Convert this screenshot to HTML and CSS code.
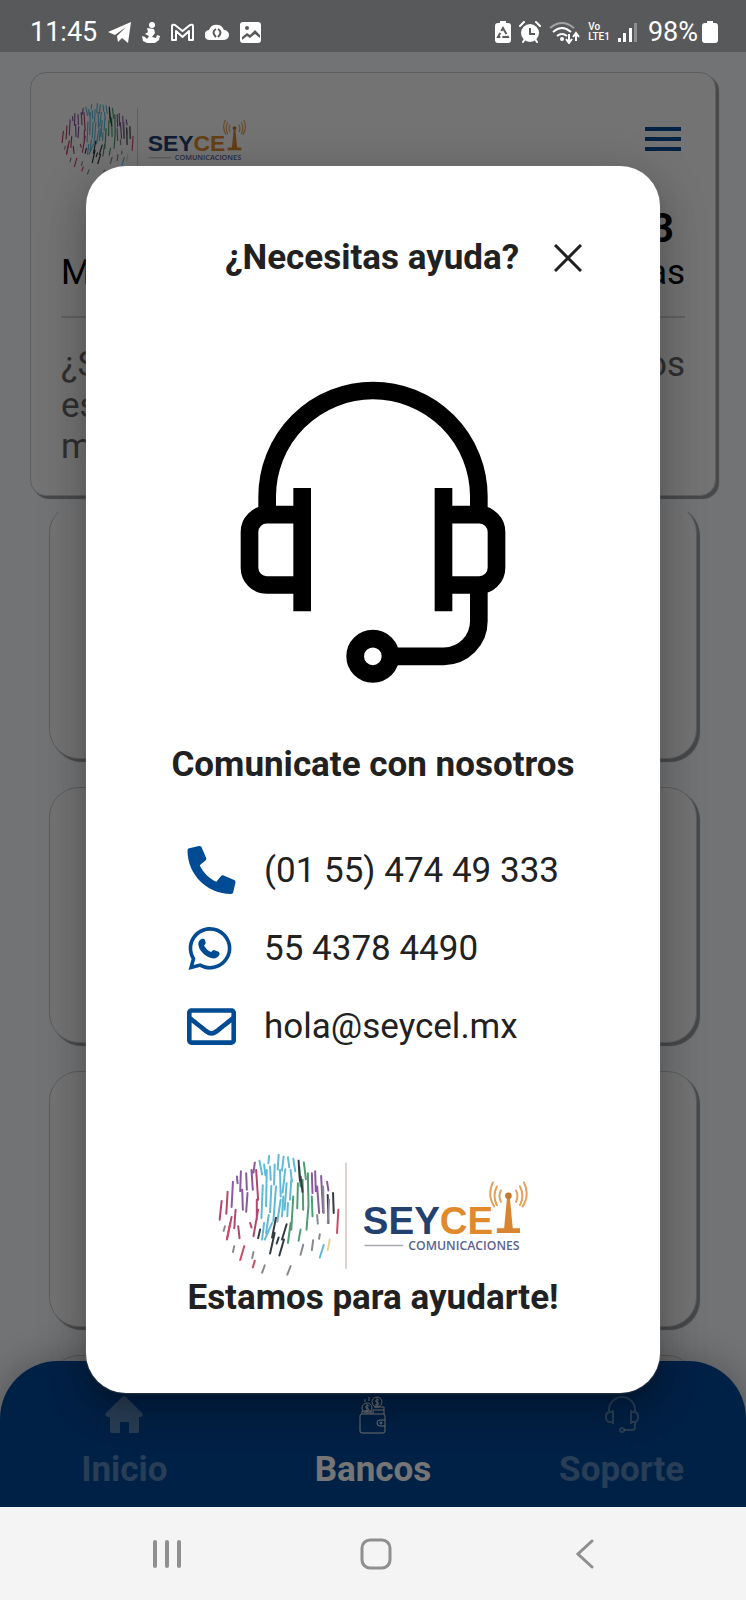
FILE: index.html
```html
<!DOCTYPE html>
<html lang="es">
<head>
  <meta charset="UTF-8">
  <meta name="viewport" content="width=device-width, initial-scale=1.0">
  <title>Seycel</title>
  <link rel="stylesheet" href="styles.css">
</head>
<body>

  <!-- Logo -->
  <svg class="sprite" aria-hidden="true">
    <symbol id="logo" viewBox="50 66 940 374">
      <g fill="none" stroke-width="6" stroke-linecap="round">
        <path stroke="#5fb9d8" d="M205 78l-2 22M234 74l-3 45M249 80l-5 42M262 82l4 30M278 86l6 38M176 92l8 42M190 104l4 32M208 110l2 40M222 104l-2 60M238 120l2 80M254 118l-8 70M270 120l4 36M186 166l-4 100M198 120l-2 110M212 168l-4 80M226 170l-8 104M240 210l-10 66M258 160l-6 80M272 150l-4 60M248 200l-4 60M262 220l-2 40M204 256l-8 54M190 280l-6 50M214 280l-22 50M370 346l-12 38"/>
        <path stroke="#8a5a9c" d="M162 98l-4 30M120 124l-2 60M136 130l2 50M152 120l4 60M124 180l2 60M140 190l-4 56M96 156l-4 76M108 140l2 20M344 124l2 60M362 138l6 110M350 170l6 80M334 130l2 60M380 156l4 26"/>
        <path stroke="#b3476d" d="M166 120l6 90M168 210l0 60M172 240l-14 80M80 186l-4 66M62 214l-6 56M104 240l-4 56M92 262l-14 66M148 280l4 14M112 290l4 36"/>
        <path stroke="#d04a66" d="M130 350l-12 42M162 394l-6 20M414 240l-4 70M88 280l-10 50"/>
        <path stroke="#4e9b74" d="M292 160l-2 76M310 98l6 50M306 150l2 90M322 130l2 100M278 200l-6 100M324 226l-6 74M334 200l2 60M270 280l-8 60M300 300l-6 34M296 110l4 60"/>
        <path stroke="#333b42" d="M294 92l4 60M300 140l6 46M226 264l-12 60M222 310l-14 62M258 284l-14 46M250 330l-14 48M234 324l-6 18M178 300l-6 26M398 190l2 60M382 196l2 84"/>
        <path stroke="#8b8790" d="M72 290l-4 14M100 350l-4 18M158 368l-4 18M192 408l-8 22M270 410l-10 26M308 346l-8 30M338 332l-4 30M358 314l-2 14M350 256l2 26M386 210l-4 70M368 170l2 80"/>
        <path stroke="#e4d49a" d="M388 330l-6 32"/>
      </g>
      <path stroke="#d9c8c4" stroke-width="5" d="M437 98v320"/>
      <text class="logo-name" x="488" y="314" fill="#23406f">SEY<tspan fill="#e08a2b">CE</tspan></text>
      <path fill="#d9852f" d="M923 200h8l9 96h22v14h-70v-14h22z"/>
      <circle cx="927" cy="198" r="10" fill="#c9772c"/>
      <g fill="none" stroke="#e3a25c" stroke-width="6" stroke-linecap="round">
        <path d="M904 182q-8 17 0 34M892 170q-14 28 0 56M880 158q-18 38 4 72M950 182q8 17 0 34M962 170q14 28 0 56M974 158q18 38-4 72"/>
      </g>
      <path stroke="#a9a9b4" stroke-width="4" d="M493 348h116"/>
      <text class="logo-sub" x="625" y="361" fill="#5b6292">COMUNICACIONES</text>
    </symbol>
  </svg>

  <!-- Barra de estado -->
  <div class="status-bar">
    <div class="status-group">
      <span class="status-text status-time">11:45</span>
      <svg width="23" height="21" viewBox="0 0 23 21" fill="#fff"><path d="M0 10 23 0l-3 21-6-5-4 4-1-6 9-9L7 13z"/></svg>
      <svg width="18" height="21" viewBox="0 0 18 21" fill="#fff"><circle cx="10" cy="3" r="3"/><path d="M5 6l7 1 1 4-3 4 4 1 1-3 3 1-1 4-4 3H5l-4-2-1-5 3 1 2 2 2-3-4-2 3-2z"/></svg>
      <svg width="23" height="19" viewBox="0 0 23 19" fill="none" stroke="#fff" stroke-width="2"><path d="M1 17V3q0-2 3-1l7.500 6L19 2q3-1 3 1v14h-4V8l-6.500 6L5 8v9z" stroke-linejoin="round"/></svg>
      <svg width="24" height="18" viewBox="0 0 24 18"><path fill="#fff" d="M5 17a5 5 0 0 1-1-10 8 8 0 0 1 15 0 5 5 0 0 1 0 10z"/><path fill="none" stroke="#58595b" stroke-width="2" d="M11 6q-5 3 0 8M13 6q5 3 0 8"/></svg>
      <svg width="21" height="21" viewBox="0 0 21 21"><rect width="21" height="21" rx="3" fill="#fff"/><circle cx="7" cy="6" r="2" fill="#58595b"/><path fill="#58595b" d="M2 15l5-4 3 2 5-5 5 5v3l-5-4-5 4-3-2-5 4z"/></svg>
    </div>
    <div class="status-group status-right">
      <svg width="16" height="22" viewBox="0 0 16 22"><path fill="#fff" d="M5 0h6v2h2q3 0 3 3v14q0 3-3 3H3q-3 0-3-3V5q0-3 3-3h2z"/><path fill="none" stroke="#58595b" stroke-width="2" stroke-dasharray="7 2" d="M8 7l5 9H3z"/></svg>
      <svg width="22" height="22" viewBox="0 0 22 22"><circle cx="11" cy="12" r="9" fill="#fff"/><path stroke="#fff" stroke-width="2" stroke-linecap="round" d="M1 5l4-4M21 5l-4-4M4 21l2-3M18 21l-2-3"/><path fill="none" stroke="#58595b" stroke-width="2" d="M11 7v6h5"/></svg>
      <svg width="31" height="23" viewBox="0 0 31 23" fill="none" stroke="#fff" stroke-width="2"><path stroke="#a2a3a4" d="M1 7q12-10 24 0"/><path d="M4 11q9-8 18 0M8 15q5-4 10 0"/><circle cx="13" cy="18" r="1"/><path d="M20 13v8M17 18l3 4 3-4M27 20v-7M24 16l3-4 3 4"/></svg>
      <span class="volte"><span>Vo</span><span>LTE1</span></span>
      <svg width="19" height="21" viewBox="0 0 19 21"><path fill="#fff" d="M0 16h3v4H0zM5 11h3v9H5zM11 6h3v14h-3z"/><path fill="#8d8e90" d="M16 1h3v19h-3z"/></svg>
      <span class="status-text">98%</span>
      <svg width="16" height="22" viewBox="0 0 16 22"><path fill="#fff" d="M5 0h6v2h2q3 0 3 3v14q0 3-3 3H3q-3 0-3-3V5q0-3 3-3h2z"/></svg>
    </div>
  </div>

  <main class="app">
    <section class="card account">
      <div class="account-top">
        <svg class="logo-small"><use href="#logo"/></svg>
        <button class="menu-button" aria-label="Menú"><i></i><i></i><i></i></button>
      </div>
      <div class="account-number">3</div>
      <div class="account-row"><span>M</span><span>as</span></div>
      <hr>
      <div class="account-help">
        <p>¿S<br>es<br>m</p>
        <p>os</p>
      </div>
    </section>

    <div class="bank-list">
      <div class="card bank"></div>
      <div class="card bank"></div>
      <div class="card bank"></div>
      <div class="card bank"></div>
    </div>

    <nav class="tabs">
      <a href="#inicio" class="tab">
        <svg width="38" height="38" viewBox="0 0 38 38" fill="currentColor"><path d="M17 1q2-2 4 0l16 16q2 3-1 4h-2v14q0 2-2 2h-8V26h-9v11H7q-2 0-2-2V21H3q-4-1-2-4z"/></svg>
        <span>Inicio</span>
      </a>
      <a href="#bancos" class="tab active">
        <svg width="28" height="38" viewBox="0 0 28 38" fill="none" stroke="currentColor"><rect x="1" y="18" width="25" height="19" rx="2"/><path d="M26 24h-5a3 3 0 0 0 0 6h5M3 18v-3h9v3M14 18v-4h11v4M15 11h10v3"/><circle cx="8" cy="12" r="5"/><circle cx="18" cy="6" r="5"/><circle cx="22" cy="27" r="1"/><path d="M20 4q-4-1-3 2 4 0 2 3h-3M18 2v8M10 10q-4-1-3 2 4 0 2 3H6M8 8v8M6 3v3M10 1v4"/></svg>
        <span>Bancos</span>
      </a>
      <a href="#soporte" class="tab">
        <svg width="34" height="38" viewBox="0 0 34 38" fill="none" stroke="currentColor" stroke-width="2"><path d="M4 15v-1a13 13 0 0 1 26 0v1M8 14v14M26 14v14M8 16H4q-3 1-3 4v2q0 3 3 4h4M26 16h4q3 1 3 4v2q0 3-3 4h-4M30 26v5q0 3-3 3h-8"/><circle cx="17" cy="34" r="2"/></svg>
        <span>Soporte</span>
      </a>
    </nav>

    <!-- Ventana de ayuda -->
    <div class="overlay">
      <section class="modal" role="dialog" aria-labelledby="help-title">
        <div class="modal-header">
          <h2 id="help-title">¿Necesitas ayuda?</h2>
          <button class="close-button" aria-label="Cerrar">
            <svg width="28" height="28" viewBox="0 0 28 28" stroke="#212121" stroke-width="3"><path d="M1 1l26 26M27 1L1 27"/></svg>
          </button>
        </div>

        <svg class="headset" viewBox="60 34 797 906" fill="none" stroke="#000" stroke-width="53">
          <path d="M141 425V380a317 317 0 0 1 635 0v45"/>
          <path d="M246 355v370M670 355v370"/>
          <path d="M246 435H140a52 52 0 0 0-52 52v107a52 52 0 0 0 52 52h106"/>
          <path d="M670 435h107a52 52 0 0 1 52 52v107a52 52 0 0 1-52 52H670"/>
          <path d="M776 655v100a105 105 0 0 1-105 105H525"/>
          <circle cx="458" cy="860" r="53"/>
        </svg>

        <h2>Comunicate con nosotros</h2>

        <ul class="contact">
          <li>
            <a href="tel:015547449333">
              <svg width="49" height="48" viewBox="0 0 512 512" fill="#004b93"><path transform="matrix(-1 0 0 1 512 0)" d="M493.400 24.600l-104-24c-11.300-2.600-22.900 3.300-27.500 13.900l-48 112c-4.200 9.800-1.400 21.300 6.900 28l60.600 49.600c-36 76.700-98.900 140.500-177.200 177.200l-49.600-60.600c-6.800-8.300-18.200-11.100-28-6.900l-112 48C3.900 366.500-2 378.100.6 389.400l24 104C27.100 504.200 36.700 512 48 512c256.100 0 464-207.500 464-464 0-11.200-7.700-20.900-18.600-23.400z"/></svg>
              <span>(01 55) 474 49 333</span>
            </a>
          </li>
          <li>
            <a href="https://wa.me/5543784490">
              <svg width="49" height="43" viewBox="-16 32 512 448" fill="#004b93"><path d="M380.900 97.100C339 55.100 283.200 32 223.900 32c-122.400 0-222 99.600-222 222 0 39.100 10.200 77.300 29.600 111L0 480l117.700-30.900c32.400 17.700 68.900 27 106.100 27h.1c122.300 0 224.100-99.600 224.100-222 0-59.300-25.200-115-67.100-157zm-157 341.600c-33.200 0-65.700-8.900-94-25.700l-6.700-4-69.800 18.300L72 359.200l-4.400-7c-18.500-29.400-28.200-63.300-28.200-98.200 0-101.700 82.800-184.500 184.600-184.500 49.300 0 95.600 19.200 130.400 54.100 34.800 34.900 56.200 81.200 56.100 130.500 0 101.800-84.900 184.600-186.600 184.600z"/><path d="M122 164q26-18 44-6l14 36q2 12-18 32 28 48 74 68 18-22 28-22l50 18q18 8 8 32-18 38-62 38-70-10-116-62-46-54-42-98 4-24 20-36z"/></svg>
              <span>55 4378 4490</span>
            </a>
          </li>
          <li>
            <a href="mailto:hola@seycel.mx">
              <svg width="49" height="37" viewBox="0 64 512 384" fill="#004b93"><path d="M464 64H48C21.490 64 0 85.490 0 112v288c0 26.510 21.490 48 48 48h416c26.510 0 48-21.490 48-48V112c0-26.510-21.490-48-48-48zm0 48v40.805c-22.422 18.259-58.168 46.651-134.587 106.490-16.841 13.247-50.201 45.072-73.413 44.701-23.208.375-56.579-31.459-73.413-44.701C106.180 199.465 70.425 171.067 48 152.805V112h416zM48 400V214.398c22.914 18.251 55.409 43.862 104.938 82.646 21.857 17.205 60.134 55.186 103.062 54.955 42.717.231 80.509-37.199 103.053-54.947 49.528-38.783 82.032-64.401 104.947-82.653V400H48z"/></svg>
              <span>hola@seycel.mx</span>
            </a>
          </li>
        </ul>

        <svg class="logo-large"><use href="#logo"/></svg>
        <h2>Estamos para ayudarte!</h2>
      </section>
    </div>
  </main>

  <!-- Botones del sistema -->
  <div class="system-nav">
    <button aria-label="Recientes"><svg width="30" height="30" viewBox="0 0 30 30" stroke="#8f8f8f" stroke-width="4" stroke-linecap="round"><path d="M3 3v24M15 3v24M27 3v24"/></svg></button>
    <button aria-label="Inicio"><svg width="32" height="32" viewBox="0 0 32 32" fill="none" stroke="#8f8f8f" stroke-width="3"><rect x="2" y="2" width="28" height="28" rx="8"/></svg></button>
    <button aria-label="Atrás"><svg width="18" height="30" viewBox="0 0 18 30" fill="none" stroke="#8f8f8f" stroke-width="3" stroke-linecap="round"><path d="M16 2L2 15l14 13"/></svg></button>
  </div>

</body>
</html>
```
FILE: styles.css
```css
* {
  box-sizing: border-box;
}

body {
  display: flex;
  flex-direction: column;
  min-height: 100vh;
  margin: 0;
  font-family: Roboto, sans-serif;
  font-size: 35px;
  color: #212121;
}

h2, p, ul {
  margin: 0;
  padding: 0;
}

a {
  color: inherit;
  text-decoration: none;
}

button {
  padding: 0;
  border: 0;
  background: none;
}

svg {
  display: block;
  flex-shrink: 0;
}

.sprite {
  position: absolute;
  width: 0;
  height: 0;
}

/* Barra de estado */
.status-bar {
  display: flex;
  justify-content: space-between;
  align-items: center;
  height: 52px;
  padding: 12px 28px 0 30px;
  background-color: #58595b;
  color: #fff;
}

.status-group {
  display: flex;
  align-items: center;
  gap: 11px;
}

.status-right {
  gap: 8px;
}

.status-text {
  font-size: 27px;
  line-height: 32px;
}

.status-right .status-text {
  margin: 0 -4px 0 3px;
}

.volte {
  display: flex;
  flex-direction: column;
  font-size: 10px;
  font-weight: 500;
  line-height: 10px;
}

/* Pantalla */
.app {
  position: relative;
  display: flex;
  flex: 1;
  flex-direction: column;
  overflow: hidden;
  padding-top: 20px;
  background-color: #f8fbff;
}

.card {
  border: 1px solid #c8cccf;
  border-radius: 16px;
  background-color: #fafafa;
  box-shadow: 3px 3px 1px #999d9f;
}

.account {
  margin: 0 30px;
  padding: 28px 30px 28px;
}

.account-top {
  display: flex;
  justify-content: space-between;
  align-items: center;
}

.logo-small {
  width: 186px;
  height: 76px;
}

.logo-name {
  font-family: "Liberation Sans", sans-serif;
  font-size: 116px;
  font-weight: bold;
}

.logo-sub {
  font-family: "Open Sans", sans-serif;
  font-size: 37px;
  font-weight: 600;
}

.menu-button {
  display: flex;
  flex-direction: column;
  gap: 6px;
  width: 36px;
  margin-right: 4px;
}

.menu-button i {
  height: 4px;
  background-color: #004b93;
}

.account-number {
  margin-top: 30px;
  padding-right: 11px;
  font-size: 40px;
  font-weight: bold;
  line-height: 44px;
  text-align: right;
  color: #000;
}

.account-row {
  display: flex;
  justify-content: space-between;
  line-height: 44px;
  color: #000;
}

.account hr {
  height: 2px;
  margin: 21px 0 26px;
  border: 0;
  background-color: #d0d3d5;
}

.account-help {
  display: flex;
  justify-content: space-between;
  line-height: 41px;
  color: #666;
}

.bank-list {
  display: flex;
  flex: 1 1 0;
  flex-direction: column;
  gap: 28px;
  overflow: hidden;
  margin-top: 16px;
  padding: 0 49px;
}

.bank {
  flex: none;
  min-height: 256px;
  border-radius: 30px;
}

.bank:first-child {
  margin-top: -9px;
}

/* Menu inferior */
.tabs {
  position: absolute;
  right: 0;
  bottom: 0;
  left: 0;
  display: grid;
  grid-template-columns: repeat(3, 1fr);
  padding: 35px 0 15px;
  border-radius: 58px 58px 0 0;
  background-color: #004898;
  box-shadow: 0 0 40px rgba(0, 0, 0, 0.3);
}

.tab {
  display: flex;
  flex-direction: column;
  align-items: center;
  gap: 14px;
  font-weight: bold;
  line-height: 44px;
  color: rgba(255, 255, 255, 0.35);
}

.tab.active {
  color: #fff;
}

/* Ventana de ayuda */
.overlay {
  position: absolute;
  inset: 0;
  display: flex;
  justify-content: center;
  align-items: center;
  background-color: rgba(0, 0, 0, 0.54);
}

.modal {
  display: flex;
  flex-direction: column;
  align-items: center;
  width: 77%;
  padding: 70px 0 73px;
  border-radius: 40px;
  background-color: #fff;
  box-shadow: 0 0 2px #777, 0 11px 15px -7px rgba(0, 0, 0, 0.2), 0 24px 38px 3px rgba(0, 0, 0, 0.14), 0 9px 46px 8px rgba(0, 0, 0, 0.12);
}

.modal h2 {
  font-size: 35px;
  line-height: 44px;
}

.modal-header {
  display: flex;
  align-items: center;
  align-self: flex-end;
  gap: 35px;
  margin-right: 78px;
}

.headset {
  width: 266px;
  height: 302px;
  margin: 101px 0 60px;
}

.contact {
  display: flex;
  flex-direction: column;
  gap: 30px;
  margin: 59px 0 102px;
  list-style: none;
}

.contact a {
  display: flex;
  align-items: center;
  gap: 28px;
  height: 48px;
}

.logo-large {
  width: 313px;
  height: 124px;
}

/* Botones del sistema */
.system-nav {
  display: grid;
  grid-template-columns: repeat(3, 1fr);
  height: 93px;
  padding: 0 57px 0 63px;
  background-color: #f4f4f4;
}

.system-nav button {
  display: flex;
  justify-content: center;
  align-items: center;
}
```
